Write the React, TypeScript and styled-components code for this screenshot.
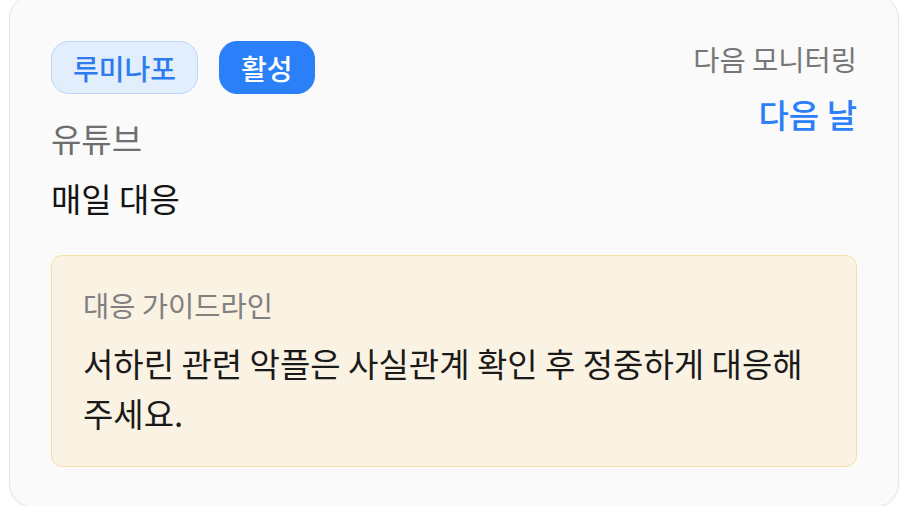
import React from 'react';
import styled, { createGlobalStyle } from 'styled-components';

const GlobalStyle = createGlobalStyle`
  html, body {
    margin: 0;
    padding: 0;
    background: #ffffff;
  }
  body {
    font-family: "Noto Sans CJK KR", "Noto Sans", sans-serif;
    overflow: hidden;
  }
`;

const Page = styled.div`
  width: 916px;
  height: 512px;
  padding: 0 17px 0 9px;
  box-sizing: border-box;
`;

const Card = styled.div`
  margin-top: -6px;
  height: 514px;
  box-sizing: border-box;
  padding: 46px 41px 41px;
  background: #fafafa;
  border: 1px solid #e4e4e4;
  border-radius: 25px;
  box-shadow: 0 1px 3px rgba(0, 0, 0, 0.04);
  display: flex;
  flex-direction: column;
`;

const Header = styled.div`
  display: flex;
  justify-content: space-between;
  align-items: flex-start;
`;

const Left = styled.div`
  display: flex;
  flex-direction: column;
`;

const Right = styled.div`
  display: flex;
  flex-direction: column;
  align-items: flex-end;
`;

const Badges = styled.div`
  display: flex;
  gap: 21px;
`;

const Badge = styled.span<{ $solid?: boolean }>`
  display: inline-flex;
  align-items: center;
  justify-content: center;
  height: 53px;
  box-sizing: border-box;
  padding: 0 21px;
  border-radius: 18px;
  font-size: 28px;
  font-weight: 500;
  background: ${(p) => (p.$solid ? '#2b7ff8' : '#e3eefd')};
  color: ${(p) => (p.$solid ? '#ffffff' : '#2e7bf0')};
  border: 1.5px solid ${(p) => (p.$solid ? '#2b7ff8' : '#b9d3fa')};
`;

const Platform = styled.div`
  margin-top: 24px;
  font-size: 33px;
  line-height: 40px;
  color: #6e6e6e;
`;

const Frequency = styled.div`
  margin-top: 20px;
  font-size: 33px;
  line-height: 40px;
  color: #141414;
`;

const NextLabel = styled.div`
  font-size: 28.5px;
  line-height: 36px;
  color: #777777;
`;

const NextValue = styled.div`
  margin-top: 17px;
  font-size: 33px;
  line-height: 40px;
  font-weight: 500;
  color: #2b7ff8;
`;

const Guide = styled.div`
  margin-top: 37px;
  padding: 31px 31px 28px;
  background: #faf2e3;
  border: 1.5px solid #f7dfa9;
  border-radius: 11px;
`;

const GuideLabel = styled.div`
  font-size: 28.5px;
  line-height: 36px;
  color: #808080;
`;

const GuideText = styled.p`
  margin: 15px 0 0;
  font-size: 33px;
  line-height: 50px;
  color: #1a1a1a;
  word-break: keep-all;
`;

export default function App() {
  return (
    <>
      <GlobalStyle />
      <Page>
        <Card>
          <Header>
            <Left>
              <Badges>
                <Badge>루미나포</Badge>
                <Badge $solid>활성</Badge>
              </Badges>
              <Platform>유튜브</Platform>
              <Frequency>매일 대응</Frequency>
            </Left>
            <Right>
              <NextLabel>다음 모니터링</NextLabel>
              <NextValue>다음 날</NextValue>
            </Right>
          </Header>
          <Guide>
            <GuideLabel>대응 가이드라인</GuideLabel>
            <GuideText>서하린 관련 악플은 사실관계 확인 후 정중하게 대응해 주세요.</GuideText>
          </Guide>
        </Card>
      </Page>
    </>
  );
}
